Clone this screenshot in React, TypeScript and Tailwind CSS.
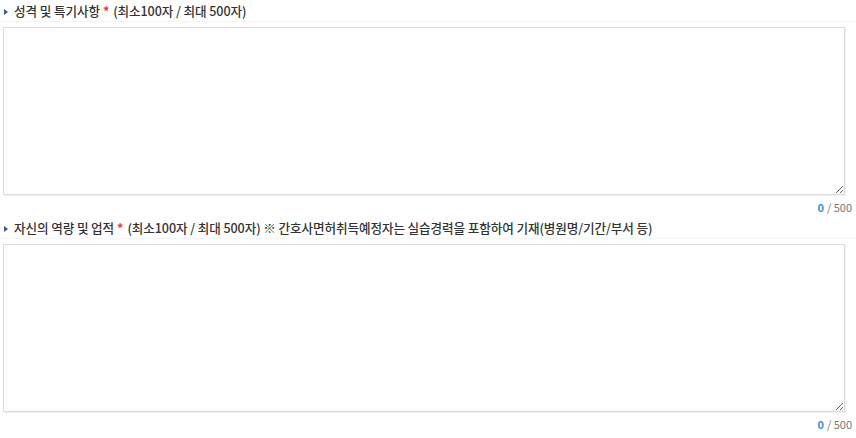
import React from "react";

const FONT = { fontFamily: '"Noto Sans CJK KR", "Noto Sans", sans-serif' };

function Field({ title, note }: { title: string; note: string }) {
    return (
        <div>
            <div className="flex h-[20px] items-center border-b border-[#f4f6f8] pl-[4px] text-[12.6px] leading-none tracking-[-0.1px] text-[#333]">
                <span className="mr-[6px] inline-block h-0 w-0 border-y-[3px] border-l-[4px] border-y-transparent border-l-[#3d5a80]" />
                <span className="font-medium">{title}</span>
                <span className="ml-[3px] font-bold text-[#e03c3c]">*</span>
                <span className="ml-[4px] font-medium">{note}</span>
            </div>
            <textarea className="mt-[5px] ml-[3px] block h-[168px] w-[842px] resize-y border border-[#dcdcdc] bg-white shadow-[1px_1px_0_#f0f0f0]" />
            <div className="flex h-[24px] items-center justify-end pr-[4px] text-[11px] text-[#777]">
                <span className="mr-[3px] font-bold text-[#3b8fd4]">0</span>/ 500
            </div>
        </div>
    );
}

export default function App() {
    return (
        <div className="h-[438px] w-[856px] overflow-hidden bg-white pt-[2px]" style={FONT}>
            <Field title="성격 및 특기사항" note="(최소100자 / 최대 500자)" />
            <Field
                title="자신의 역량 및 업적"
                note="(최소100자 / 최대 500자) ※ 간호사면허취득예정자는 실습경력을 포함하여 기재(병원명/기간/부서 등)"
            />
        </div>
    );
}
